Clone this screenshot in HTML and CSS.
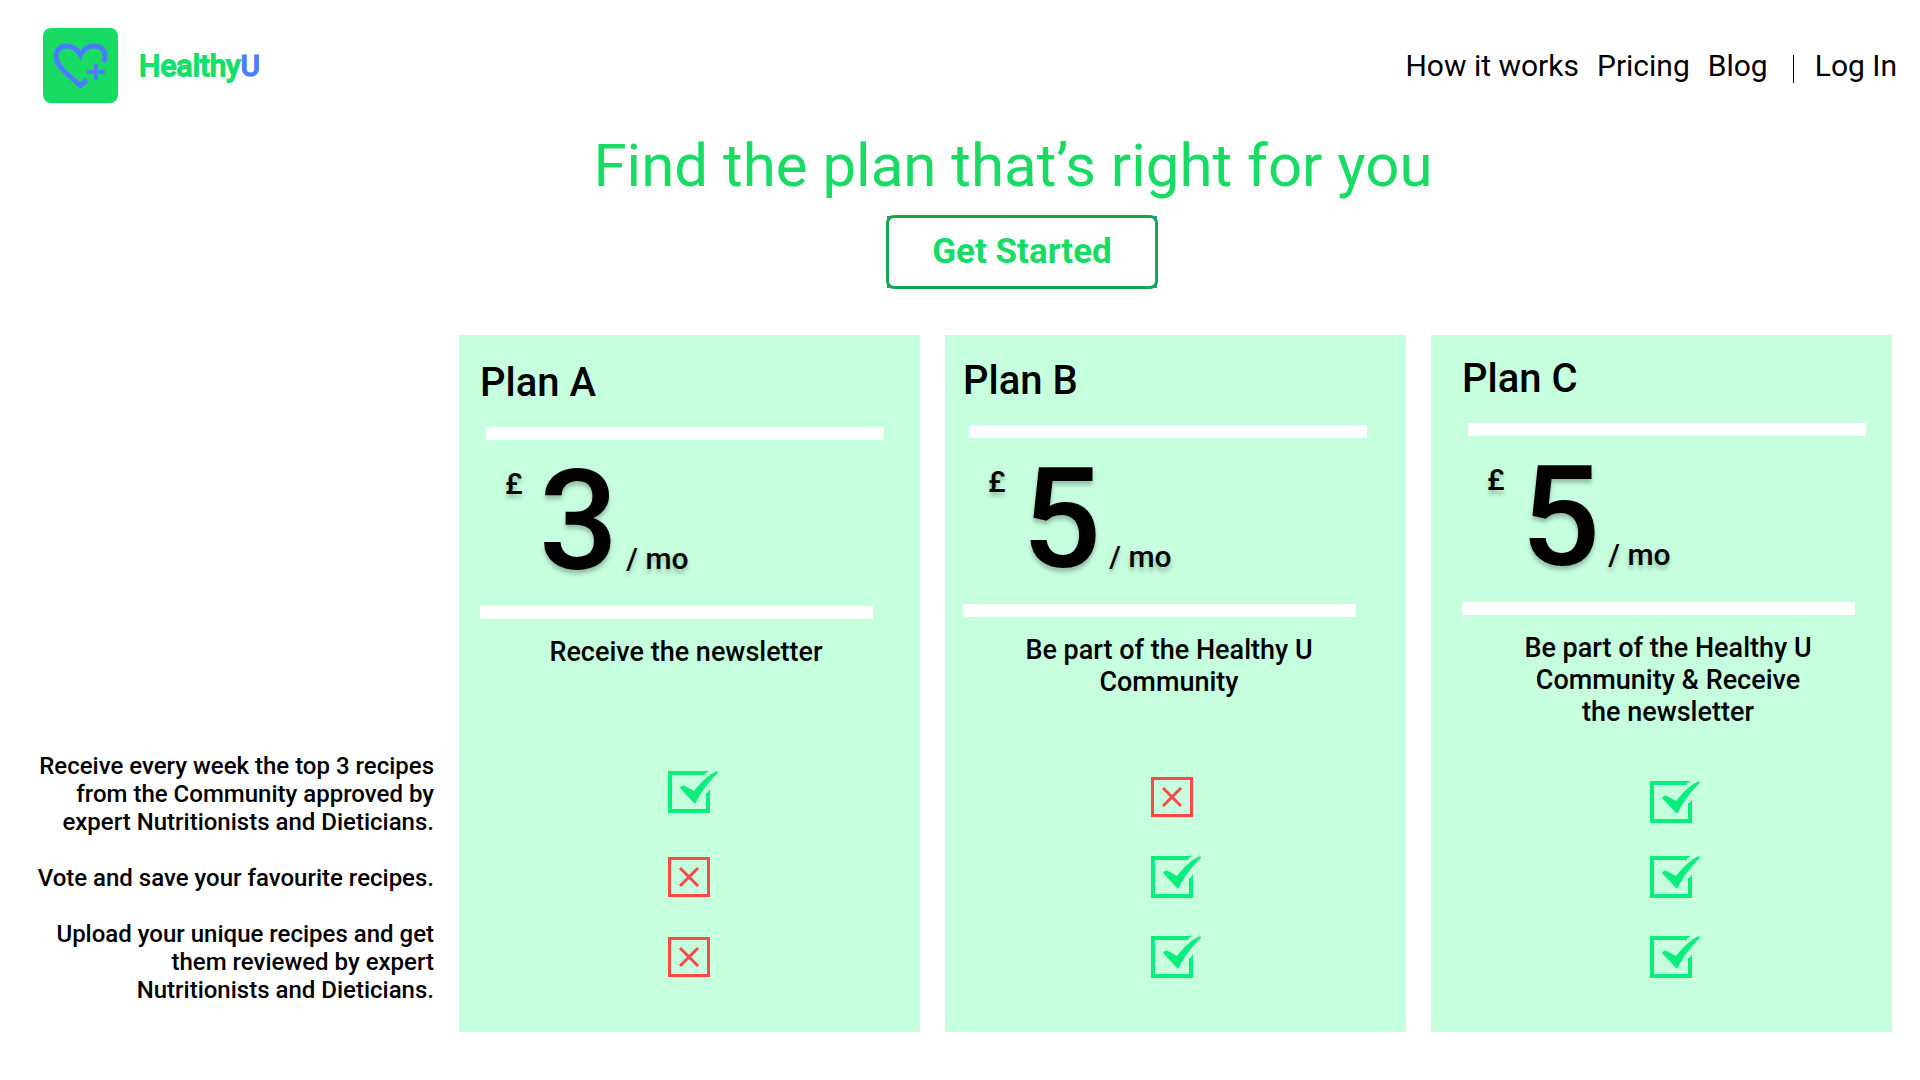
FILE: index.html
```html
<!DOCTYPE html>
<html lang="en">
<head>
<meta charset="utf-8">
<title>HealthyU – Pricing</title>
<link rel="stylesheet" href="styles.css">
</head>
<body>
<svg class="sprite" aria-hidden="true">
  <symbol id="yes" viewBox="0 0 50 42">
    <path d="M37 2H2v38h38V22" fill="none" stroke="#0aee7e" stroke-width="4"/>
    <path d="M34 0h7l-6 4zM38 24l4-6v8h-4z" fill="#0aee7e"/>
    <path d="M12 17c1-2 3-3 5-2l9 5C33 11 40 4 49 0l1 2C41 10 34 20 27 33L12 17z" fill="#0aee7e"/>
  </symbol>
  <symbol id="no" viewBox="0 0 50 42">
    <path d="M1.500 2.500h39v37h-39z" fill="none" stroke="#ff4747" stroke-width="3"/>
    <path d="M12 12l18 18M30 12L12 30" stroke="#ff4747" stroke-width="3"/>
  </symbol>
</svg>

<header class="header">
  <a class="brand" href="#">
    <svg class="logo" viewBox="0 0 75 75" aria-hidden="true">
      <rect width="75" height="75" rx="8" fill="#18db64"/>
      <path d="M44 52l-6.500 5.500C21 44 13 37 13 28c0-6 4-10 10.500-10 6 0 11 3 14 9 3-6 8-9 13-9C58 18 62 22 62 28c0 2-.5 4-1.500 6" fill="none" stroke="#4a7cff" stroke-width="5"/>
      <path d="M53 36v16M44 44h18" stroke="#4a7cff" stroke-width="4"/>
    </svg>
    <span class="brand-name">Healthy<span class="brand-u">U</span></span>
  </a>
  <nav class="nav">
    <a href="#">How it works</a>
    <a href="#">Pricing</a>
    <a href="#">Blog</a>
    <a class="login" href="#">Log In</a>
  </nav>
</header>

<section class="hero">
  <h1>Find the plan that’s right for you</h1>
  <button class="cta" type="button">Get Started</button>
</section>

<main class="plans">
  <ul class="features">
    <li>Receive every week the top 3 recipes from the Community approved by expert Nutritionists and Dieticians.</li>
    <li>Vote and save your favourite recipes.</li>
    <li>Upload your unique recipes and get them reviewed by expert Nutritionists and Dieticians.</li>
  </ul>

  <article class="plan plan-a">
    <h2>Plan A</h2>
    <div class="price"><span class="currency">£</span><span class="amount">3</span><span class="period">/ mo</span></div>
    <p class="summary">Receive the newsletter</p>
    <div class="marks">
      <svg role="img" aria-label="Included"><use href="#yes"/></svg>
      <svg role="img" aria-label="Not included"><use href="#no"/></svg>
      <svg role="img" aria-label="Not included"><use href="#no"/></svg>
    </div>
  </article>

  <article class="plan plan-b">
    <h2>Plan B</h2>
    <div class="price"><span class="currency">£</span><span class="amount">5</span><span class="period">/ mo</span></div>
    <p class="summary">Be part of the Healthy U Community</p>
    <div class="marks">
      <svg role="img" aria-label="Not included"><use href="#no"/></svg>
      <svg role="img" aria-label="Included"><use href="#yes"/></svg>
      <svg role="img" aria-label="Included"><use href="#yes"/></svg>
    </div>
  </article>

  <article class="plan plan-c">
    <h2>Plan C</h2>
    <div class="price"><span class="currency">£</span><span class="amount">5</span><span class="period">/ mo</span></div>
    <p class="summary">Be part of the Healthy U Community &amp; Receive the newsletter</p>
    <div class="marks">
      <svg role="img" aria-label="Included"><use href="#yes"/></svg>
      <svg role="img" aria-label="Included"><use href="#yes"/></svg>
      <svg role="img" aria-label="Included"><use href="#yes"/></svg>
    </div>
  </article>
</main>
</body>
</html>
```
FILE: styles.css
```css
* {
  box-sizing: border-box;
}

body {
  margin: 0;
  background: #fff;
  color: #000;
  font-family: Roboto, "Liberation Sans", sans-serif;
  font-weight: 500;
}

h1,
h2,
p,
ul {
  margin: 0;
  padding: 0;
}

a {
  color: inherit;
  text-decoration: none;
}

.sprite {
  display: none;
}

/* Header */

.header {
  display: flex;
  align-items: center;
  justify-content: space-between;
  padding: 28px 23px 0 43px;
}

.brand {
  display: flex;
  align-items: center;
  gap: 21px;
}

.logo {
  width: 75px;
  height: 75px;
}

.brand-name {
  color: #18db64;
  font-size: 30px;
  font-weight: 400;
  -webkit-text-stroke: 2px #14e06c;
}

.brand-u {
  color: #4a7cff;
  font-weight: 500;
  -webkit-text-stroke: 1px #4a7cff;
}

.nav {
  display: flex;
  gap: 18px;
  font-size: 30px;
  font-weight: 400;
  line-height: 36px;
}

.login {
  display: flex;
  align-items: center;
  gap: 21px;
  padding-left: 7px;
}

.login::before {
  content: "";
  width: 1px;
  height: 28px;
  margin-top: 6px;
  background: #000;
}

/* Title and call to action */

.hero {
  display: flex;
  flex-direction: column;
  align-items: center;
  isolation: isolate;
  padding: 28px 0 46px 106px;
}

h1 {
  color: #18db64;
  font-size: 60px;
  font-weight: 400;
  line-height: 70px;
}

.cta {
  position: relative;
  width: 272px;
  height: 74px;
  margin: 14px 0 0 18px;
  padding: 0 0 2px;
  border: 3px solid #16a84e;
  border-radius: 8px;
  background: #fff;
  color: #18db64;
  font: 700 35px Roboto, "Liberation Sans", sans-serif;
}

.cta::before {
  content: "";
  position: absolute;
  inset: -2px;
  z-index: -1;
  background: #4a7cff;
}

/* Plans */

.plans {
  display: grid;
  grid-template-columns: 406px repeat(3, 1fr);
  gap: 25px;
  padding: 0 28px 48px;
}

.features {
  display: flex;
  flex-direction: column;
  gap: 28px;
  padding: 417px 0 0 8px;
  font-size: 24px;
  line-height: 28px;
  list-style: none;
  text-align: right;
}

.plan {
  display: flex;
  flex-direction: column;
  min-height: 697px;
  padding-bottom: 54px;
  background: #c6ffde;
}

.plan-a {
  padding-top: 24px;
  padding-left: 21px;
  padding-right: 36px;
}

.plan-b {
  padding-top: 22px;
  padding-left: 18px;
  padding-right: 39px;
}

.plan-c {
  padding-top: 20px;
  padding-left: 31px;
  padding-right: 26px;
}

h2 {
  font-size: 40px;
  font-weight: 500;
  line-height: 48px;
}

.price {
  display: flex;
  flex-wrap: wrap;
  align-items: baseline;
  margin-top: 20px;
  text-shadow: 0 4px 4px rgba(0, 0, 0, 0.25);
}

/* White bars above and below the price */
.price::before,
.price::after {
  content: "";
  height: 13px;
  background: #fff;
}

.price::before {
  flex: 0 0 calc(100% - 6px);
  margin: 0 0 11px 6px;
}

.price::after {
  flex: 0 0 calc(100% - 11px);
  margin: 15px 11px 0 0;
}

.currency,
.period {
  font-size: 30px;
  line-height: 36px;
}

.currency {
  align-self: flex-start;
  padding: 15px 16px 0 25px;
}

.amount {
  font-size: 140px;
  line-height: 140px;
}

.period {
  padding-left: 8px;
}

.summary {
  width: 300px;
  margin: 17px 0 0 56px;
  font-size: 27px;
  line-height: 32px;
  text-align: center;
}

.marks {
  display: flex;
  flex-direction: column;
  margin-top: auto;
  padding-left: 188px;
}

.marks svg {
  width: 50px;
  height: 42px;
}

.marks svg + svg {
  margin-top: 38px;
}

.plan-a .marks svg:first-child {
  margin-bottom: 5px;
}

.plan-c .marks svg:first-child {
  margin-bottom: -5px;
}
```
